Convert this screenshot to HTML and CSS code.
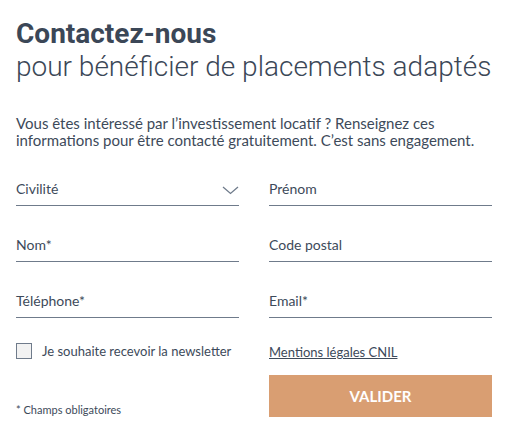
FILE: index.html
```html
<!DOCTYPE html>
<html lang="fr">
<head>
<meta charset="utf-8">
<link rel="stylesheet" href="styles.css">
</head>
<body>
<main class="contact">
  <h1 class="title">Contactez-nous</h1>
  <h2 class="subtitle">pour bénéficier de placements adaptés</h2>
  <p class="intro">Vous êtes intéressé par l’investissement locatif ? Renseignez ces informations pour être contacté gratuitement. C’est sans engagement.</p>
  <form class="form">
    <div class="field select">
      <span>Civilité</span>
      <svg class="chev" width="17" height="9" viewBox="0 0 17 9"><path d="M1 1 L8.5 7.5 L16 1" fill="none" stroke="#6f7b8b" stroke-width="1.3"/></svg>
    </div>
    <div class="field"><span>Prénom</span></div>
    <div class="field"><span>Nom*</span></div>
    <div class="field"><span>Code postal</span></div>
    <div class="field last"><span>Téléphone*</span></div>
    <div class="field last"><span>Email*</span></div>
    <label class="check"><span class="box"></span>Je souhaite recevoir la newsletter</label>
    <a class="cnil" href="#">Mentions légales CNIL</a>
    <p class="req">* Champs obligatoires</p>
    <button class="submit" type="button">VALIDER</button>
  </form>
</main>
</body>
</html>
```
FILE: styles.css
```css
* { box-sizing: border-box; }
body {
  margin: 0;
  background: #fff;
  font-family: Lato, "Liberation Sans", sans-serif;
  color: #3d4a5a;
}
.contact { padding: 18px 20px 0 16px; }
.title {
  margin: 0;
  font-family: Roboto, sans-serif;
  font-weight: 700;
  font-size: 28px;
  line-height: 32px;
  color: #3b4757;
}
.subtitle {
  margin: 0;
  font-family: Roboto, sans-serif;
  font-weight: 300;
  font-size: 28px;
  line-height: 34px;
  color: #3b4757;
}
.intro {
  margin: 31px 0 0;
  font-size: 15px;
  line-height: 17px;
  color: #3d4a5a;
}
.form {
  margin-top: 30px;
  display: grid;
  grid-template-columns: 223px 223px;
  column-gap: 30px;
}
.field {
  height: 27px;
  display: flex;
  align-items: flex-start;
  justify-content: space-between;
  font-size: 14px;
  line-height: 20px;
  color: #3d4a5a;
  border-bottom: 1.5px solid #6f7b8b;
  margin-bottom: 29px;
}
.field.last { margin-bottom: 0; }
.chev { margin-top: 7px; }
.check {
  display: flex;
  align-items: center;
  gap: 10px;
  font-size: 13px;
  line-height: 16px;
  color: #3d4a5a;
  margin-top: 25px;
  height: 16px;
  white-space: nowrap;
}
.box {
  width: 16px;
  height: 16px;
  flex: none;
  border: 1.5px solid #6f7b8b;
  background: #f2f2f2;
}
.cnil {
  margin-top: 26px;
  font-size: 13px;
  line-height: 16px;
  height: 16px;
  color: #3d4a5a;
  text-decoration: underline;
  justify-self: start;
}
.req {
  margin: 0;
  align-self: end;
  font-size: 11px;
  line-height: 14px;
  color: #3d4a5a;
}
.submit {
  margin-top: 15px;
  height: 42px;
  border: 0;
  background: #d99e72;
  color: #fff;
  font-family: Lato, sans-serif;
  font-weight: 700;
  font-size: 15px;
}
```
